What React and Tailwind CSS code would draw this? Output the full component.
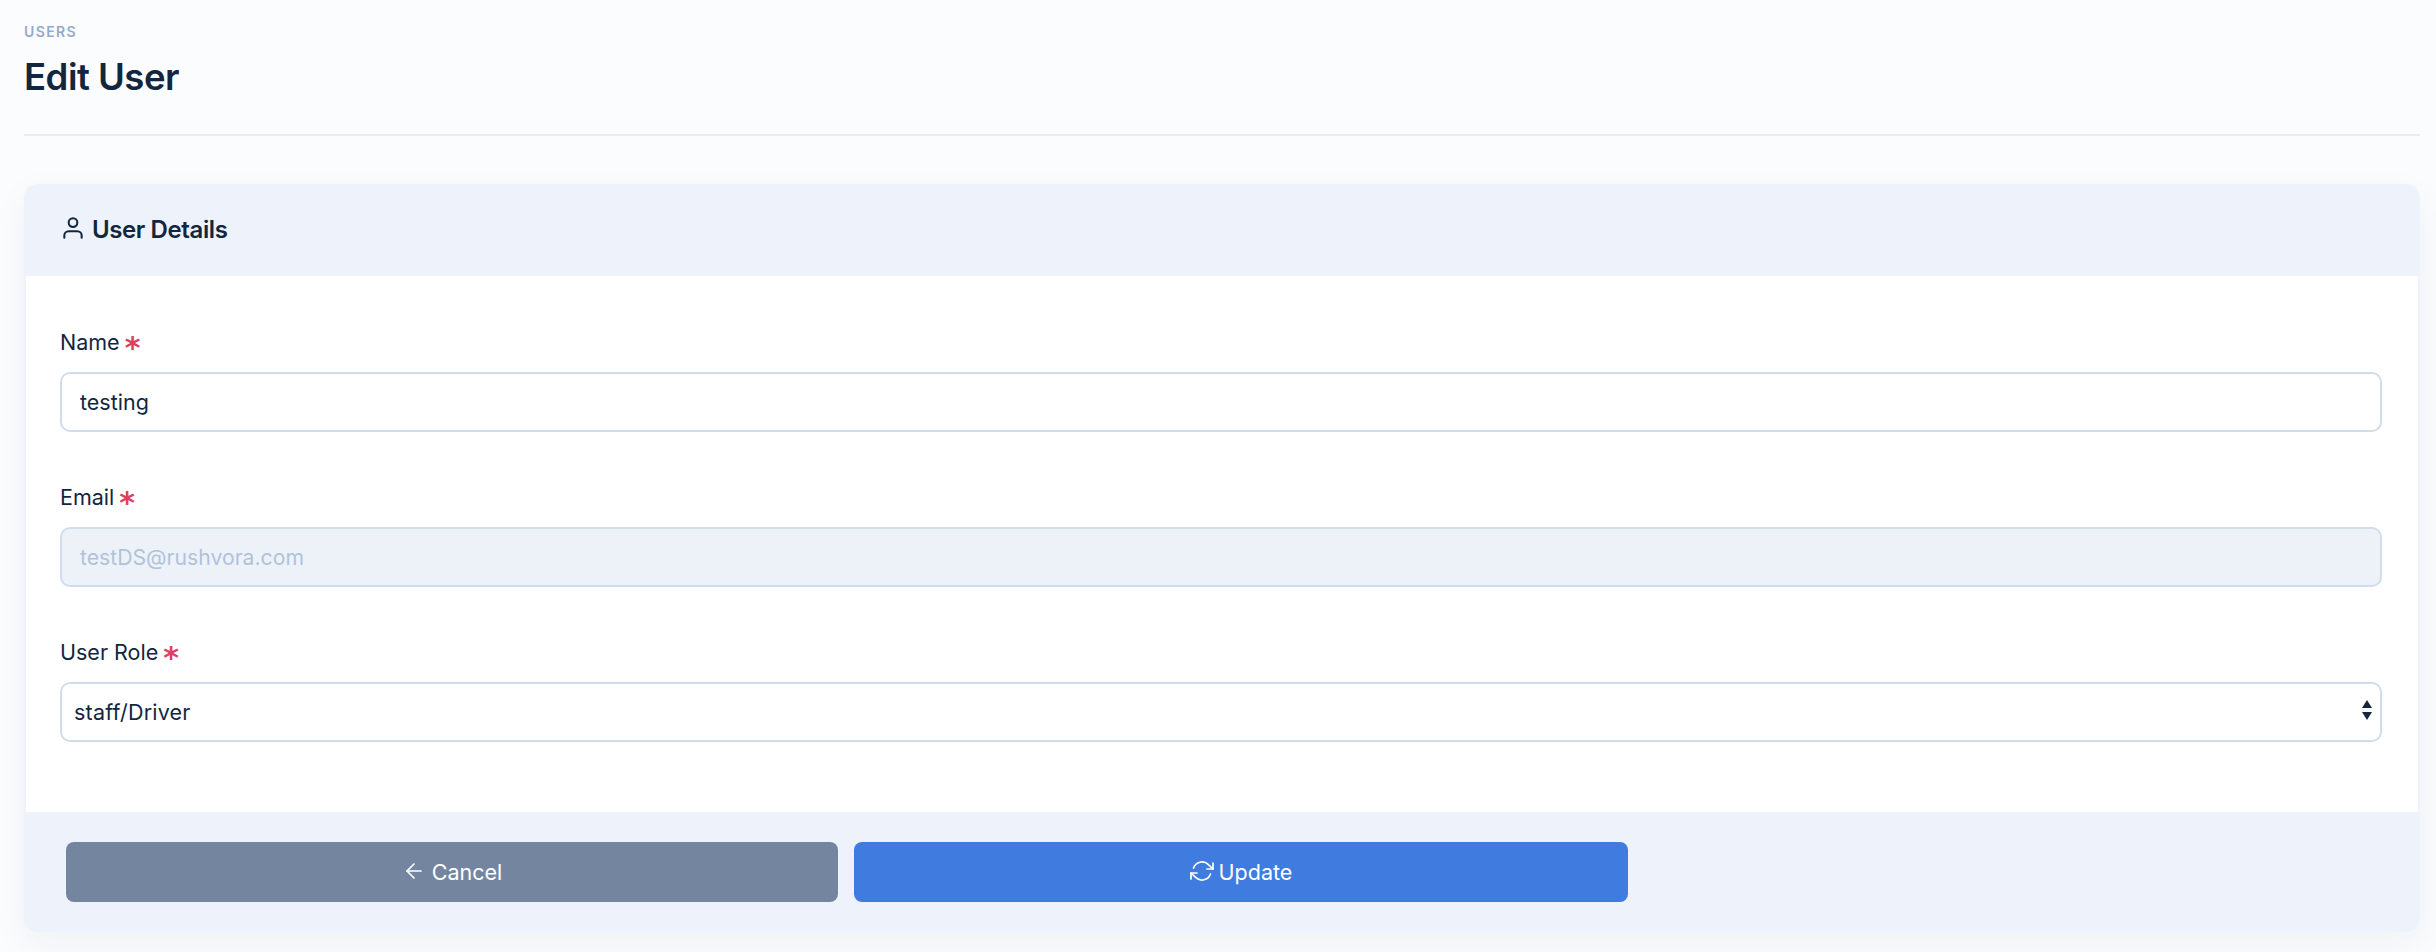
import React from "react";

function Star() {
  return <span className="text-[#e0405f] text-[30px] font-bold leading-none ml-[5px] inline-block translate-y-[6px]" style={{fontFamily:"'DejaVu Sans', sans-serif"}}>*</span>;
}

function Label({ children }) {
  return (
    <label className="flex items-center h-[28px] mb-[16px] text-[21.5px] text-[#12263f]">
      {children}
      <Star />
    </label>
  );
}

export default function App() {
  return (
    <div className="min-h-[952px] bg-[#fbfcfe] pl-6 pr-4 pt-[23px] pb-5 font-['Inter','Liberation_Sans',sans-serif] text-[#12263f]">
      <header className="h-[113px] border-b-2 border-[#e6ecf5]">
        <div className="text-[14px] leading-[18px] font-semibold tracking-[1.4px] text-[#95aac9]">USERS</div>
        <h1 className="mt-[13px] text-[36.5px] leading-[46px] font-semibold tracking-[-0.5px]">Edit User</h1>
      </header>
      <section className="mt-[48px] rounded-[14px] bg-[#eef2fa] px-[2px] shadow-[0_12px_36px_rgba(18,38,63,0.05)]">
        <div className="flex items-center h-[92px] px-[34px] text-[24px] font-semibold tracking-[-0.4px]">
          <svg width="26" height="26" viewBox="0 0 24 24" fill="none" stroke="#12263f" strokeWidth="1.9" strokeLinecap="round" strokeLinejoin="round" className="mr-[6px] -mt-[5px]">
            <path d="M20 21v-2a4 4 0 0 0-4-4H8a4 4 0 0 0-4 4v2" />
            <circle cx="12" cy="7" r="4" />
          </svg>
          User Details
        </div>
        <div className="bg-white pl-[34px] pr-[36px] h-[536px] pt-[52px]">
          <Label>Name</Label>
          <input readOnly value="testing" className="block w-full h-[60px] rounded-[10px] border-2 border-[#d2ddec] bg-white px-[18px] text-[21.5px] text-[#12263f] outline-none" />
          <div className="mt-[51px]">
            <Label>Email</Label>
            <input disabled value="testDS@rushvora.com" className="block w-full h-[60px] rounded-[10px] border-2 border-[#d2ddec] bg-[#edf2f9] px-[18px] text-[21.2px] text-[#b1c2d9] outline-none" />
          </div>
          <div className="mt-[51px]">
            <Label>User Role</Label>
            <div className="relative">
              <select defaultValue="staff" className="block w-full h-[60px] appearance-none rounded-[10px] border-2 border-[#d2ddec] bg-white px-3 text-[21.5px] tracking-[0.2px] text-[#12263f] outline-none">
                <option value="staff">staff/Driver</option>
              </select>
              <svg width="10" height="20" viewBox="0 0 10 20" className="absolute right-[10px] top-[18px]" fill="#12263f">
                <path d="M5 0L10 8H0Z" />
                <path d="M0 12H10L5 20Z" />
              </svg>
            </div>
          </div>
        </div>
        <div className="flex gap-4 h-[120px] pt-[30px] pl-[40px] rounded-b-[14px]">
          <button className="flex items-center justify-center gap-[6px] w-[772px] h-[60px] rounded-[8px] bg-[#7485a0] text-white text-[21.5px]">
            <svg width="24" height="24" viewBox="0 0 24 24" fill="none" stroke="#fff" strokeWidth="1.7" strokeLinecap="round" strokeLinejoin="round" className="-mt-[2px]">
              <path d="M19 12H5" />
              <path d="M12 19l-7-7 7-7" />
            </svg>
            Cancel
          </button>
          <button className="flex items-center justify-center gap-[5px] w-[774px] h-[60px] rounded-[8px] bg-[#407cdf] text-white text-[21.5px]">
            <svg width="24" height="24" viewBox="0 0 24 24" fill="none" stroke="#fff" strokeWidth="1.7" strokeLinecap="round" strokeLinejoin="round" className="-mt-[2px]">
              <path d="M23 4v6h-6" />
              <path d="M1 20v-6h6" />
              <path d="M3.51 9a9 9 0 0 1 14.85-3.36L23 10M1 14l4.64 4.36A9 9 0 0 0 20.49 15" />
            </svg>
            Update
          </button>
        </div>
      </section>
    </div>
  );
}
